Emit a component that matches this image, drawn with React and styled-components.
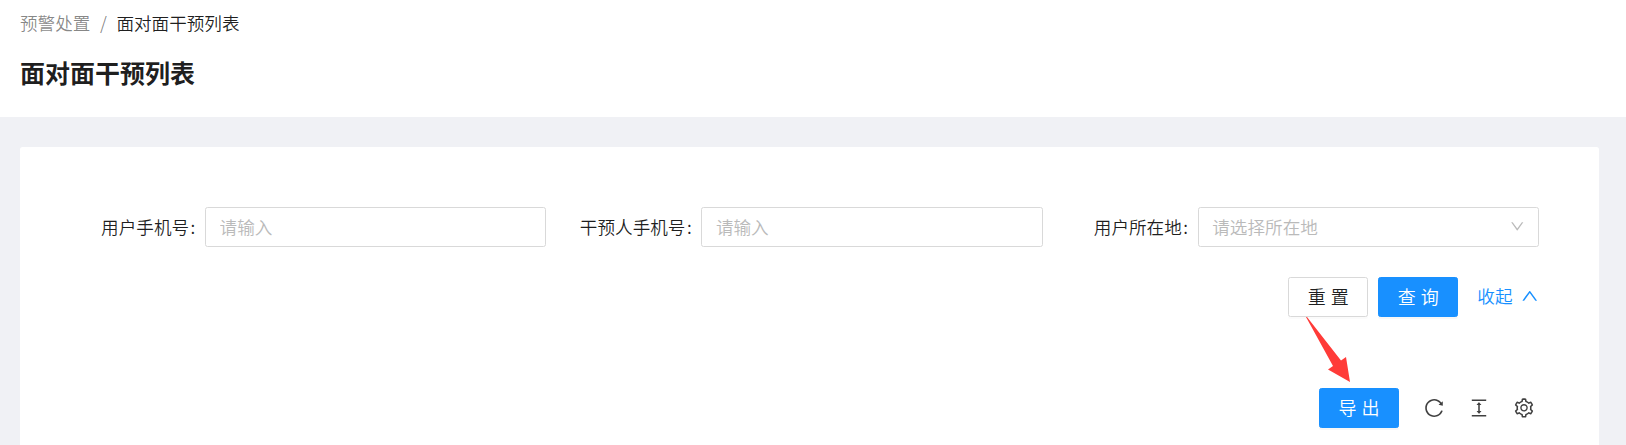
import React from 'react';
import styled, { createGlobalStyle, css } from 'styled-components';
import {
  AiOutlineReload,
  AiOutlineColumnHeight,
  AiOutlineSetting,
  AiOutlineDown,
  AiOutlineUp,
} from 'react-icons/ai';

const GlobalStyle = createGlobalStyle`
  *, *::before, *::after { box-sizing: border-box; }
  body {
    margin: 0;
    overflow: hidden;
    background: #f0f1f5;
    color: rgba(0, 0, 0, 0.88);
    font-family: "Noto Sans CJK SC", sans-serif;
    font-size: 17.6px;
    font-weight: 350;
    line-height: 27.5px;
  }
`;

const Page = styled.div`
  height: 445px;
  overflow: hidden;
`;

const PageHeader = styled.header`
  height: 117px;
  padding: 9px 20px 0;
  background: #fff;
`;

const Breadcrumb = styled.nav`
  display: flex;
  color: rgba(0, 0, 0, 0.48);
`;

const Separator = styled.span`
  width: 26px;
  text-align: center;
`;

const Current = styled.span`
  color: rgba(0, 0, 0, 0.88);
`;

const Title = styled.h1`
  margin: 15px 0 0;
  font-size: 25px;
  font-weight: 700;
  line-height: 40px;
`;

const Card = styled.main`
  height: 320px;
  margin: 30px 27px 0 20px;
  padding: 60px 60px 0;
  background: #fff;
  border-radius: 2.5px;
`;

const Fields = styled.form`
  display: grid;
  grid-template-columns: repeat(3, 1fr);
  column-gap: 30px;
`;

const Field = styled.div`
  display: flex;
  align-items: center;
  justify-content: flex-end;
`;

const Label = styled.label`
  margin-right: 9.5px;
  white-space: nowrap;

  &::after {
    content: ":";
    margin-left: 1.5px;
  }
`;

const controlBox = css`
  flex: none;
  width: 341.5px;
  height: 40px;
  padding: 0 13.75px;
  border: 1px solid #d9d9d9;
  border-radius: 2.5px;
  background: #fff;
`;

const Input = styled.input`
  ${controlBox}
  padding-bottom: 2px;
  font: inherit;
  outline: none;

  &::placeholder {
    color: #bababa;
    opacity: 1;
  }
`;

const Select = styled.div`
  ${controlBox}
  display: flex;
  align-items: center;
  justify-content: space-between;
  color: #bababa;

  svg {
    width: 16.5px;
    height: 16.5px;
    margin: -2px -1px 0 0;
  }
`;

const Actions = styled.div`
  display: flex;
  justify-content: flex-end;
  gap: 10px;
  margin-top: 30px;
`;

const Button = styled.button`
  width: 80px;
  height: 40px;
  padding: 0 0 1px 5px;
  font: inherit;
  font-size: 18px;
  letter-spacing: 5px;
  border-radius: 2.5px;
  border: 1px solid ${(p) => (p.$primary ? '#1890ff' : '#d9d9d9')};
  background: ${(p) => (p.$primary ? '#1890ff' : '#fff')};
  color: ${(p) => (p.$primary ? '#fff' : 'rgba(0, 0, 0, 0.88)')};
  box-shadow: 0 2px 0 ${(p) => (p.$primary ? 'rgba(0, 0, 0, 0.03)' : 'rgba(0, 0, 0, 0.015)')};
`;

const Collapse = styled.a`
  display: flex;
  align-items: center;
  gap: 7px;
  margin-left: 9px;
  padding-bottom: 2px;
  color: #1890ff;

  svg {
    width: 19.5px;
    height: 19.5px;
  }
`;

const Toolbar = styled.div`
  position: relative;
  display: flex;
  align-items: center;
  justify-content: flex-end;
  margin-top: 71px;
`;

const ToolIcons = styled.div`
  display: flex;
  gap: 23px;
  margin: 0 4px 0 24px;
  color: rgba(0, 0, 0, 0.75);

  svg {
    display: block;
    width: 22px;
    height: 22px;
  }
`;

const Pointer = styled.svg`
  position: absolute;
  top: -71px;
  right: 188px;
  width: 45px;
  height: 66px;
`;

function TextField({ label }) {
  return (
    <Field>
      <Label>{label}</Label>
      <Input placeholder="请输入" />
    </Field>
  );
}

export default function App() {
  return (
    <Page>
      <GlobalStyle />
      <PageHeader>
        <Breadcrumb>
          <span>预警处置</span>
          <Separator>/</Separator>
          <Current>面对面干预列表</Current>
        </Breadcrumb>
        <Title>面对面干预列表</Title>
      </PageHeader>
      <Card>
        <Fields>
          <TextField label="用户手机号" />
          <TextField label="干预人手机号" />
          <Field>
            <Label>用户所在地</Label>
            <Select>
              <span>请选择所在地</span>
              <AiOutlineDown />
            </Select>
          </Field>
        </Fields>
        <Actions>
          <Button type="button">重置</Button>
          <Button type="button" $primary>查询</Button>
          <Collapse>
            收起
            <AiOutlineUp />
          </Collapse>
        </Actions>
        <Toolbar>
          <Button type="button" $primary>导出</Button>
          <ToolIcons>
            <AiOutlineReload />
            <AiOutlineColumnHeight />
            <AiOutlineSetting />
          </ToolIcons>
          <Pointer viewBox="0 0 45 66">
            <path d="M0 0H1L35 43.5L40 40L44 65L22 52.5L27 49Z" fill="#ff3b38" />
          </Pointer>
        </Toolbar>
      </Card>
    </Page>
  );
}
